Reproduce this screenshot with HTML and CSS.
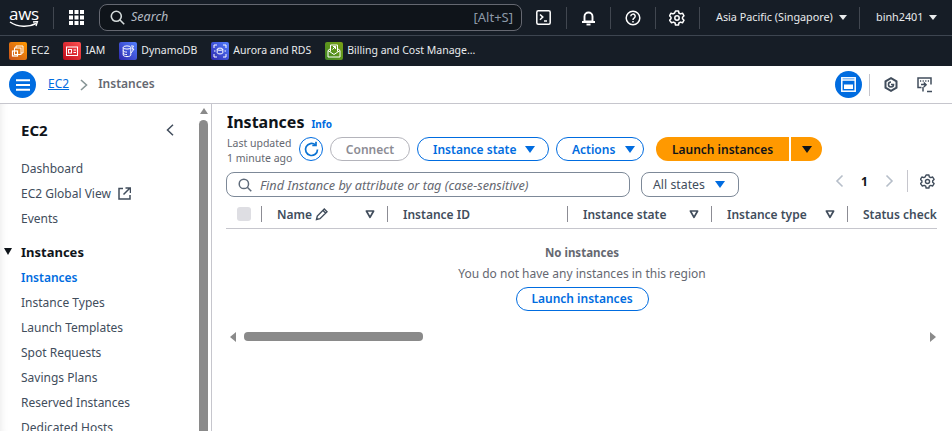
FILE: index.html
```html
<!DOCTYPE html>
<html>
<head>
  <meta charset="UTF-8">
  <title>Instances | EC2</title>
  <link rel="stylesheet" href="styles.css">
</head>
<body>
  <!-- top bar -->
  <header class="topbar">
    <div class="logo">
      <span class="logo-text">aws</span>
      <svg class="logo-smile" width="30" height="8" viewBox="0 0 30 8"><path d="M1 1C9 6.5 20 6.5 27 2.5" fill="none" stroke="#fff" stroke-width="1.5"/><path d="M24 1l4.5-.5-1.5 4.5" fill="none" stroke="#fff" stroke-width="1.3"/></svg>
    </div>
    <span class="top-sep"></span>
    <svg class="grid-icon" width="15" height="15" viewBox="0 0 15 15" fill="#fff"><rect width="4" height="4"/><rect x="5.5" width="4" height="4"/><rect x="11" width="4" height="4"/><rect y="5.5" width="4" height="4"/><rect x="5.5" y="5.5" width="4" height="4"/><rect x="11" y="5.5" width="4" height="4"/><rect y="11" width="4" height="4"/><rect x="5.5" y="11" width="4" height="4"/><rect x="11" y="11" width="4" height="4"/></svg>
    <div class="top-search">
      <svg width="15" height="15" viewBox="0 0 15 15" fill="none" stroke="#d5dbdb" stroke-width="1.6"><circle cx="6.3" cy="6.3" r="5"/><path d="M10 10l4.2 4.2"/></svg>
      <span class="top-search-text">Search</span>
      <span class="top-search-key">[Alt+S]</span>
    </div>
    <button class="top-icon">
      <svg width="15" height="15" viewBox="0 0 15 15" fill="none" stroke="#fff" stroke-width="1.5"><rect x=".8" y=".8" width="13.4" height="13.4" rx="1.5"/><path d="M4 4.5l2.8 2.6L4 9.7M8 11h3"/></svg>
    </button>
    <span class="top-sep"></span>
    <button class="top-icon">
      <svg width="15" height="16" viewBox="0 0 15 16" fill="none" stroke="#fff" stroke-width="1.9"><path d="M3.5 11.5V6.5a4 4 0 0 1 8 0v5zM1 12h13"/><path d="M5.5 14.5h4"/></svg>
    </button>
    <span class="top-sep"></span>
    <button class="top-icon">
      <svg width="16" height="16" viewBox="0 0 16 16" fill="none" stroke="#fff" stroke-width="1.5"><circle cx="8" cy="8" r="6.8"/><path d="M5.8 6.3a2.2 2.2 0 1 1 3.3 1.9c-.8.5-1.1.9-1.1 1.7"/><path d="M8 11v1.5"/></svg>
    </button>
    <span class="top-sep"></span>
    <button class="top-icon">
      <svg width="16" height="16" viewBox="0 0 16 16" fill="none" stroke="#fff" stroke-width="1.5"><path d="M6.5 1h3l.4 2 1.6.9 2-.7 1.5 2.6-1.5 1.4v1.6l1.5 1.4-1.5 2.6-2-.7-1.6.9-.4 2h-3l-.4-2-1.6-.9-2 .7L.5 10.2 2 8.8V7.2L.5 5.8 2 3.2l2 .7 1.6-.9z" stroke-linejoin="round"/><circle cx="8" cy="8" r="2.2"/></svg>
    </button>
    <span class="top-sep"></span>
    <span class="top-menu region">Asia Pacific (Singapore)<i class="caret-w"></i></span>
    <span class="top-sep"></span>
    <span class="top-menu">binh2401<i class="caret-w"></i></span>
  </header>

  <!-- favorites -->
  <nav class="favbar">
    <a class="fav"><svg class="fav-icon orange" viewBox="0 0 18 18" fill="none" stroke="#fff" stroke-width="1"><path d="M7 6V4h7v7h-2"/><rect x="5.5" y="6" width="6.5" height="6.5"/><rect x="3.5" y="9" width="5" height="5" stroke-width="1.2"/></svg>EC2</a>
    <a class="fav"><svg class="fav-icon red" viewBox="0 0 18 18" fill="none" stroke="#fff" stroke-width="1"><rect x="3.5" y="5" width="11" height="8.5"/><rect x="5.5" y="7.5" width="3" height="3.5"/><path d="M10.5 8h2.5M10.5 10.5h2.5"/></svg>IAM</a>
    <a class="fav"><svg class="fav-icon blue" viewBox="0 0 18 18" fill="none" stroke="#fff" stroke-width="1"><ellipse cx="8" cy="5.5" rx="3.8" ry="1.6"/><path d="M4.2 5.5v7.5c0 .9 1.7 1.6 3.8 1.6s3.8-.7 3.8-1.6V5.5M4.2 8.5c0 .9 1.7 1.6 3.8 1.6M4.2 11c0 .9 1.7 1.6 3.8 1.6"/><path d="M12 4l2.5 0-1.5 3h2l-3 4"/></svg>DynamoDB</a>
    <a class="fav"><svg class="fav-icon blue" viewBox="0 0 18 18" fill="none" stroke="#fff" stroke-width="1"><ellipse cx="9" cy="7.2" rx="2.8" ry="1.1"/><path d="M6.2 7.2v3.6c0 .6 1.3 1.1 2.8 1.1s2.8-.5 2.8-1.1V7.2"/><path d="M3 6V3h3M12 3h3v3M3 12v3h3M12 15h3v-3M3 9h1.5M13.5 9H15"/></svg>Aurora and RDS</a>
    <a class="fav"><svg class="fav-icon green" viewBox="0 0 18 18" fill="none" stroke="#fff" stroke-width="1"><path d="M3 8.5l6 4 6-4V15H3zM3 8.5l2.5-2M15 8.5l-2.5-2M5.5 9.5V3h7v6.5"/><path d="M7.5 7.5l3-3M8 4.5h2.5V7"/></svg>Billing and Cost Manage...</a>
  </nav>

  <!-- breadcrumb row -->
  <div class="crumbbar">
    <button class="round-btn">
      <svg width="14" height="12" viewBox="0 0 14 12" stroke="#fff" stroke-width="2"><path d="M0 1.2h14M0 6h14M0 10.8h14"/></svg>
    </button>
    <a class="crumb-link">EC2</a>
    <svg class="crumb-arrow" width="8" height="12" viewBox="0 0 8 12" fill="none" stroke="#879596" stroke-width="1.6"><path d="M1 1l5.5 5L1 11"/></svg>
    <span class="crumb-here">Instances</span>
    <div class="crumb-tools">
      <button class="round-btn">
        <svg width="15" height="15" viewBox="0 0 15 15" fill="none" stroke="#fff" stroke-width="1.5"><rect x=".8" y=".8" width="13.4" height="13.4"/><rect x="3" y="7.5" width="9" height="4.5" fill="#fff" stroke="none"/><path d="M1 3h13"/></svg>
      </button>
      <span class="tool-sep"></span>
      <svg class="tool-icon" width="14" height="15" viewBox="0 0 14 15" fill="none" stroke="#414d5c" stroke-width="2"><path d="M7 1.2l5.5 3.1v6.4L7 13.8l-5.5-3.1V4.3z"/><path d="M7 5a2.5 2.5 0 1 0 2.5 2.5H7" stroke-width="1.6"/></svg>
      <svg class="tool-icon last" width="15" height="16" viewBox="0 0 15 16" fill="none" stroke="#414d5c" stroke-width="1.5"><path d="M4.5 10.5H1V1h13v6.5"/><path d="M3 4h1.2M5.6 4h1.2M8.2 4h1.2M10.8 4H12" stroke-width="1.4"/><path d="M4 7.5h4.5M6.8 5.5l2.3 2.2-2.3 2.3M6 10v4.5M10 14.5h5"/></svg>
    </div>
  </div>

  <div class="layout">
    <!-- side navigation -->
    <aside class="sidenav">
      <div class="sidenav-inner">
        <div class="side-head">
          <span>EC2</span>
          <svg width="8" height="12" viewBox="0 0 8 12" fill="none" stroke="#414d5c" stroke-width="1.5"><path d="M7 .8L1.5 6 7 11.2"/></svg>
        </div>
        <a class="side-link">Dashboard</a>
        <a class="side-link">EC2 Global View <svg class="ext-icon" width="13" height="13" viewBox="0 0 13 13" fill="none" stroke="#414d5c" stroke-width="1.5"><path d="M5 1.5H1v10.5h11V8"/><path d="M5.5 7.5L11.5 1.5M7.5 1h5v5" /></svg></a>
        <a class="side-link">Events</a>
        <div class="side-group"><i class="caret-k"></i>Instances</div>
        <a class="side-link active">Instances</a>
        <a class="side-link">Instance Types</a>
        <a class="side-link">Launch Templates</a>
        <a class="side-link">Spot Requests</a>
        <a class="side-link">Savings Plans</a>
        <a class="side-link">Reserved Instances</a>
        <a class="side-link">Dedicated Hosts</a>
      </div>
      <div class="side-scroll">
        <i class="arrow-up"></i>
        <div class="side-thumb"></div>
      </div>
    </aside>

    <main class="content">
      <div class="title-row">
        <h1>Instances</h1>
        <a class="info">Info</a>
      </div>
      <div class="action-row">
        <div class="updated">Last updated<br>1 minute ago</div>
        <button class="refresh">
          <svg width="17" height="17" viewBox="0 0 17 17" fill="none" stroke="#0972d3" stroke-width="1.7"><path d="M14.5 8.5a6 6 0 1 1-2-4.5"/><path d="M13 .8V4.5H9.3"/></svg>
        </button>
        <button class="btn disabled">Connect</button>
        <button class="btn btn-state">Instance state<i class="caret-b"></i></button>
        <button class="btn btn-actions">Actions<i class="caret-b"></i></button>
        <div class="split">
          <button class="split-main">Launch instances</button>
          <button class="split-arrow"><i class="caret-k"></i></button>
        </div>
      </div>
      <div class="filter-row">
        <div class="filter-input">
          <svg width="14" height="14" viewBox="0 0 15 15" fill="none" stroke="#5f6b7a" stroke-width="1.6"><circle cx="6.3" cy="6.3" r="5"/><path d="M10 10l4.2 4.2"/></svg>
          <span>Find Instance by attribute or tag (case-sensitive)</span>
        </div>
        <div class="state-select">All states<i class="caret-b"></i></div>
        <div class="pager">
          <svg width="9" height="14" viewBox="0 0 9 14" fill="none" stroke="#b6bec9" stroke-width="1.6"><path d="M7.5 1.5L2 7l5.5 5.5"/></svg>
          <span class="page-num">1</span>
          <svg width="9" height="14" viewBox="0 0 9 14" fill="none" stroke="#b6bec9" stroke-width="1.6"><path d="M1.5 1.5L7 7l-5.5 5.5"/></svg>
          <span class="pager-sep"></span>
          <svg width="15" height="15" viewBox="0 0 16 16" fill="none" stroke="#414d5c" stroke-width="1.5"><path d="M6.5 1h3l.4 2 1.6.9 2-.7 1.5 2.6-1.5 1.4v1.6l1.5 1.4-1.5 2.6-2-.7-1.6.9-.4 2h-3l-.4-2-1.6-.9-2 .7L.5 10.2 2 8.8V7.2L.5 5.8 2 3.2l2 .7 1.6-.9z" stroke-linejoin="round"/><circle cx="8" cy="8" r="2.2"/></svg>
        </div>
      </div>

      <div class="table-head">
        <div class="cell cell-check"><span class="checkbox"></span></div>
        <div class="cell cell-name">Name
          <svg class="pencil" width="14" height="14" viewBox="0 0 14 14" fill="none" stroke="#414d5c" stroke-width="1.4"><path d="M1.5 12.5l.8-3.5 7-7 2.7 2.7-7 7zM8 3.5l2.5 2.5"/></svg>
          <svg class="sort" width="10" height="9" viewBox="0 0 10 9" fill="none" stroke="#414d5c" stroke-width="1.7"><path d="M1.4 1h7.2L5 7.4z" stroke-linejoin="round"/></svg>
        </div>
        <div class="cell cell-id">Instance ID</div>
        <div class="cell cell-state">Instance state
          <svg class="sort" width="10" height="9" viewBox="0 0 10 9" fill="none" stroke="#414d5c" stroke-width="1.7"><path d="M1.4 1h7.2L5 7.4z" stroke-linejoin="round"/></svg>
        </div>
        <div class="cell cell-type">Instance type
          <svg class="sort" width="10" height="9" viewBox="0 0 10 9" fill="none" stroke="#414d5c" stroke-width="1.7"><path d="M1.4 1h7.2L5 7.4z" stroke-linejoin="round"/></svg>
        </div>
        <div class="cell cell-status">Status check</div>
      </div>

      <div class="empty">
        <strong>No instances</strong>
        <p>You do not have any instances in this region</p>
        <button class="btn small">Launch instances</button>
      </div>

      <div class="h-scroll">
        <i class="arrow-left"></i>
        <div class="h-thumb"></div>
        <i class="arrow-right"></i>
      </div>
    </main>
  </div>
</body>
</html>
```

FILE: styles.css
```css
html, body {
  margin:0; padding:0;
  width:100%; height:100%;
  overflow:hidden;
  font-family:"Noto Sans", "Open Sans", sans-serif;
  font-size:12px;
  color:#414d5c;
  background:#fff;
}
button {
  font-family:inherit;
  cursor:pointer;
}

/* top bar */
.topbar {
  display:flex;
  align-items:center;
  height:35px;
  background:#161d26;
  border-bottom:1px solid #3d4550;
  color:#fff;
  padding-left:8px;
}
.logo {
  width:32px;
  height:26px;
  display:flex;
  flex-direction:column;
  align-items:center;
}
.logo-text {
  font-family:"Open Sans", sans-serif;
  font-size:17px;
  line-height:17px;
  letter-spacing:-.3px;
  color:#fff;
}
.logo-smile { margin-top:-1px; }
.top-sep {
  width:1px;
  height:22px;
  flex:none;
  background:#414750;
}
.topbar > .top-sep:first-of-type { margin-left:13px; }
.grid-icon { margin:0 0 0 15px; flex:none; }
.top-search {
  display:flex;
  align-items:center;
  width:423px;
  height:27px;
  margin-left:15px;
  padding:0 8px 0 10px;
  box-sizing:border-box;
  border:1px solid #656871;
  border-radius:8px;
  background:#0f141a;
}
.top-search-text {
  margin:0 0 2px 6px;
  font-style:italic;
  color:#b4bbc4;
  font-size:12.5px;
}
.top-search-key {
  margin:0 0 2px auto;
  color:#8d99a8;
  font-size:13px;
}
.top-icon {
  width:43.5px;
  height:26px;
  flex:none;
  padding:0;
  background:none;
  border:none;
  display:flex;
  align-items:center;
  justify-content:center;
}
.top-menu {
  display:flex;
  align-items:center;
  color:#e9ebed;
  font-size:10.8px;
  white-space:nowrap;
  padding:0 0 2px 16px;
}
.top-menu.region { width:159px; box-sizing:border-box; flex:none; }
.caret-w {
  width:0; height:0;
  margin:2px 0 0 6px;
  border-left:4px solid transparent;
  border-right:4px solid transparent;
  border-top:5px solid #e9ebed;
}

/* favorites */
.favbar {
  display:flex;
  align-items:center;
  height:28px;
  background:#161d26;
  padding:0 0 2px 9px;
  gap:14px;
  font-size:10.5px;
  color:#e9ebed;
}
.fav {
  display:flex;
  align-items:center;
  gap:4px;
  white-space:nowrap;
}
.fav-icon {
  width:18px;
  height:18px;
  margin-top:2px;
  border-radius:2px;
}
.orange { background:linear-gradient(45deg,#c8511b,#ff9900); }
.red { background:linear-gradient(45deg,#bd0816,#ff5252); }
.blue { background:linear-gradient(45deg,#2e27ad,#527fff); }
.green { background:linear-gradient(45deg,#3f8624,#7aa116); }

/* breadcrumbs */
.crumbbar {
  display:flex;
  align-items:center;
  height:37px;
  padding:0 20px 0 9px;
  border-bottom:1px solid #c6c6cd;
  background:#fff;
}
.round-btn {
  width:27px;
  height:27px;
  padding:0;
  border:none;
  border-radius:50%;
  background:#006ce0;
  display:flex;
  align-items:center;
  justify-content:center;
}
.crumb-link {
  margin:0 0 2px 12px;
  color:#006ce0;
  text-decoration:underline;
  font-size:12px;
}
.crumb-arrow { margin:0 10px 0 11px; }
.crumb-here {
  margin-bottom:2px;
  font-weight:600;
  color:#656871;
  font-size:12px;
}
.crumb-tools {
  margin-left:auto;
  display:flex;
  align-items:center;
}
.tool-sep {
  width:1px;
  height:22px;
  background:#c6c6cd;
  margin:0 14px 0 7px;
}
.tool-icon { margin-right:19px; }
.tool-icon.last { margin-right:0; }

/* layout */
.layout {
  display:flex;
  height:327px;
  overflow:hidden;
}
.sidenav {
  width:212px;
  flex:none;
  display:flex;
  border-right:1px solid #c6c6cd;
  box-shadow:inset 8px 0 8px -8px #e4e4e4;
  box-sizing:border-box;
}
.sidenav-inner {
  flex:1;
  padding:0 0 0 21px;
  overflow:hidden;
}
.side-head {
  display:flex;
  align-items:center;
  justify-content:space-between;
  height:52px;
  padding-right:25px;
  font-size:15px;
  font-weight:700;
  color:#0f141a;
}
.side-link {
  display:flex;
  align-items:center;
  gap:3px;
  height:25px;
  white-space:nowrap;
  color:#414d5c;
}
.ext-icon { margin-left:4px; }
.side-link.active {
  color:#006ce0;
  font-weight:600;
}
.side-group {
  position:relative;
  display:flex;
  align-items:center;
  height:26px;
  margin-top:8px;
  font-size:13px;
  font-weight:700;
  color:#0f141a;
}
.side-group .caret-k {
  position:absolute;
  left:-17px;
  top:9px;
}
.caret-k {
  display:block;
  width:0; height:0;
  border-left:4.5px solid transparent;
  border-right:4.5px solid transparent;
  border-top:7px solid #0f141a;
}
.side-scroll {
  width:9px;
  margin-right:3px;
  flex:none;
}
.arrow-up {
  display:block;
  width:0; height:0;
  margin:4px auto 6px;
  border-left:4.5px solid transparent;
  border-right:4.5px solid transparent;
  border-bottom:6px solid #8a8a8a;
}
.side-thumb {
  height:330px;
  background:#8a8a8a;
  border-radius:5px 5px 0 0;
}

/* main content */
.content {
  flex:1;
  min-width:0;
  padding:0 15px 0 14px;
  overflow:hidden;
}
.title-row {
  display:flex;
  align-items:baseline;
  gap:7px;
  margin:7px 0 0 1px;
  height:23px;
}
h1 {
  margin:0;
  font-size:16px;
  font-weight:700;
  color:#0f141a;
}
.info {
  color:#006ce0;
  font-size:10px;
  font-weight:700;
}
.action-row {
  display:flex;
  align-items:center;
  height:30px;
  padding-left:1px;
}
.updated {
  width:72px;
  margin-top:3px;
  font-size:10.5px;
  line-height:15px;
  color:#656871;
  white-space:nowrap;
}
.refresh {
  width:24px;
  height:24px;
  padding:0;
  border:1.5px solid #006ce0;
  border-radius:50%;
  background:#fff;
  display:flex;
  align-items:center;
  justify-content:center;
  margin-right:7px;
}
.btn {
  display:flex;
  align-items:center;
  height:24px;
  padding:0 13px 0 15px;
  margin-right:7px;
  border:1.5px solid #006ce0;
  border-radius:12px;
  background:#fff;
  color:#006ce0;
  font-size:12px;
  font-weight:600;
  white-space:nowrap;
  box-sizing:border-box;
}
.btn.disabled {
  width:80px;
  padding:0;
  justify-content:center;
  border:1px solid #b4b4bb;
  color:#8c8c94;
}
.btn-state { width:132px; }
.btn-actions { width:88px; margin-right:12px; padding-right:8px; }
.btn .caret-b { margin-left:auto; }
.caret-b {
  display:block;
  width:0; height:0;
  margin-left:10px;
  border-left:5px solid transparent;
  border-right:5px solid transparent;
  border-top:7px solid #006ce0;
}
.split {
  display:flex;
  height:24px;
}
.split button {
  border:none;
  padding:0;
  background:#ff9900;
  color:#0f141a;
  font-size:12px;
  font-weight:600;
}
.split-main {
  width:133px;
  border-radius:12px 0 0 12px;
}
.split-arrow {
  width:31px;
  margin-left:2px;
  border-radius:0 12px 12px 0;
  display:flex;
  align-items:center;
  justify-content:center;
}
.split-arrow .caret-k {
  border-left-width:5px;
  border-right-width:5px;
}
.filter-row {
  display:flex;
  align-items:center;
  height:25px;
  margin-top:8px;
}
.filter-input {
  display:flex;
  align-items:center;
  gap:8px;
  width:404px;
  height:25px;
  padding-left:11px;
  box-sizing:border-box;
  border:1px solid #7d8998;
  border-radius:8px;
  font-style:italic;
  font-size:12.7px;
  color:#656871;
}
.state-select {
  display:flex;
  align-items:center;
  height:25px;
  width:98px;
  margin-left:11px;
  padding-left:11px;
  box-sizing:border-box;
  border:1px solid #7d8998;
  border-radius:8px;
  font-size:12.3px;
  color:#414d5c;
  white-space:nowrap;
}
.pager {
  margin:0 2px 7px auto;
  display:flex;
  align-items:center;
}
.page-num {
  width:41px;
  text-align:center;
  font-weight:700;
  color:#0f141a;
}
.pager-sep {
  width:1px;
  height:22px;
  background:#c6c6cd;
  margin:0 12.5px;
}

/* table */
.table-head {
  display:flex;
  align-items:center;
  height:28px;
  margin-top:3px;
  border-bottom:1px solid #c6c6cd;
  font-weight:600;
  color:#414d5c;
  white-space:nowrap;
}
.cell {
  display:flex;
  align-items:center;
  height:16px;
  box-sizing:border-box;
  flex:none;
  border-left:1px solid #8c8c94;
  padding-left:15px;
}
.cell-check {
  width:35px;
  border-left:none;
  padding-left:11px;
}
.checkbox {
  width:14px;
  height:14px;
  border-radius:3px;
  background:#dedee3;
}
.cell-name { width:126px; }
.pencil { margin-left:3px; }
.cell-id { width:180px; }
.cell-state { width:144px; }
.cell-type { width:136px; }
.cell-status { width:90px; }
.sort {
  margin-left:auto;
  margin-right:12px;
}
.empty {
  display:flex;
  flex-direction:column;
  align-items:center;
  padding-top:14px;
  margin-left:1px;
  color:#656871;
}
.empty strong { font-size:11.5px; line-height:20px; }
.empty p {
  margin:1px 0 3px;
  line-height:20px;
  font-size:12px;
}
.btn.small {
  margin:0;
  padding:0 0 2px;
  width:133px;
  justify-content:center;
  height:24px;
}
.h-scroll {
  display:flex;
  align-items:center;
  margin:20px 1px 0 4px;
  height:11px;
}
.h-thumb {
  width:179px;
  height:9px;
  margin-left:8px;
  border-radius:4px;
  background:#8a8a8a;
}
.arrow-left, .arrow-right {
  display:block;
  width:0; height:0;
  border-top:5px solid transparent;
  border-bottom:5px solid transparent;
}
.arrow-left { border-right:6px solid #8a8a8a; }
.arrow-right { margin-left:auto; border-left:6px solid #8a8a8a; }
```
